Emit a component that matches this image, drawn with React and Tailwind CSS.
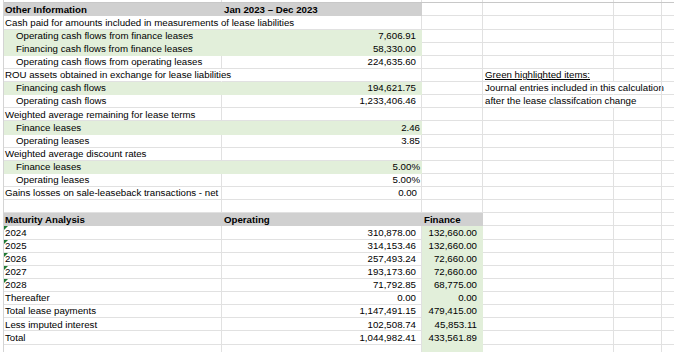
import React from 'react';

// column widths of the sheet: A..F
const W = [218, 200, 61, 131, 48, 60];
const GREEN = 'bg-[#e2efda]';
const GRAY = 'bg-[#d0d0d0]';

const ROWS = [
  { a: 'Other Information', b: 'Jan 2023 – Dec 2023', head: true, fill: [GRAY, GRAY] },
  { a: 'Cash paid for amounts included in measurements of lease liabilities', spillA: true },
  { a: 'Operating cash flows from finance leases', ind: true, b: '7,606.91', fill: [GREEN, GREEN] },
  { a: 'Financing cash flows from finance leases', ind: true, b: '58,330.00', fill: [GREEN, GREEN] },
  { a: 'Operating cash flows from operating leases', ind: true, b: '224,635.60' },
  { a: 'ROU assets obtained in exchange for lease liabilities', spillA: true, d: 'Green highlighted items:', ul: true },
  { a: 'Financing cash flows', ind: true, b: '194,621.75', fill: [GREEN, GREEN], d: 'Journal entries included in this calculation', spillD: true },
  { a: 'Operating cash flows', ind: true, b: '1,233,406.46', d: 'after the lease classifcation change', spillD: true },
  { a: 'Weighted average remaining for lease terms' },
  { a: 'Finance leases', ind: true, b: '2.46', tight: true, fill: [GREEN, GREEN] },
  { a: 'Operating leases', ind: true, b: '3.85', tight: true },
  { a: 'Weighted average discount rates' },
  { a: 'Finance leases', ind: true, b: '5.00%', tight: true, fill: [GREEN, GREEN] },
  { a: 'Operating leases', ind: true, b: '5.00%', tight: true },
  { a: 'Gains losses on sale-leaseback transactions - net', b: '0.00', mid: true },
  {},
  { a: 'Maturity Analysis', b: 'Operating', c: 'Finance', head: true, fill: [GRAY, GRAY, GRAY] },
  { a: '2024', tri: true, b: '310,878.00', c: '132,660.00', fill: [null, null, GREEN] },
  { a: '2025', tri: true, b: '314,153.46', c: '132,660.00', fill: [null, null, GREEN] },
  { a: '2026', tri: true, b: '257,493.24', c: '72,660.00', fill: [null, null, GREEN] },
  { a: '2027', tri: true, b: '193,173.60', c: '72,660.00', fill: [null, null, GREEN] },
  { a: '2028', tri: true, b: '71,792.85', c: '68,775.00', fill: [null, null, GREEN] },
  { a: 'Thereafter', b: '0.00', c: '0.00', fill: [null, null, GREEN] },
  { a: 'Total lease payments', b: '1,147,491.15', c: '479,415.00', fill: [null, null, GREEN] },
  { a: 'Less imputed interest', b: '102,508.74', c: '45,853.11', fill: [null, null, GREEN] },
  { a: 'Total', b: '1,044,982.41', c: '433,561.89', fill: [null, null, GREEN] },
  { fill: [null, null, GREEN] },
];

function Cell({ w, fill, noLine, right, bold, pl = 'pl-[1px]', pr = 'pr-[5px]', ul, tri, children }) {
  // filled cells keep their borders but paint them with the fill, as Excel hides gridlines there
  const bottom = fill ? 'border-b-transparent' : 'border-b-[#e1e1e1]';
  const side = fill || noLine ? 'border-r-transparent' : 'border-r-[#e1e1e1]';
  return (
    <div
      style={{ width: w }}
      className={`relative shrink-0 h-full flex items-end border-b border-r whitespace-nowrap ${fill || ''} ${bottom} ${side} ${
        right ? `justify-end ${pr}` : pl
      }`}
    >
      {tri && (
        <span className="absolute top-0 left-0 w-0 h-0 border-t-[4px] border-t-[#1f7a34] border-r-[4px] border-r-transparent" />
      )}
      <span className={`leading-[1.12] ${bold ? 'font-bold' : ''} ${ul ? 'underline' : ''}`}>{children}</span>
    </div>
  );
}

export default function App() {
  return (
    <div className="w-[674px] h-[352px] overflow-hidden bg-white text-black text-[9.7px] [font-family:'Liberation_Sans',Arial,sans-serif]">
      <div className="ml-[3px] border-l border-[#d4d4d4] flex flex-col">
        {/* sliver of the row above */}
        <div className="h-[3.3px] flex border-b border-[#c8c8c8]">
          {W.map((w, i) => (
            <div key={i} style={{ width: w }} className="shrink-0 border-r border-[#e1e1e1]" />
          ))}
        </div>
        {ROWS.map((r, i) => {
          const f = r.fill || [];
          return (
            <div key={i} className="h-[13.13px] flex">
              <Cell w={W[0]} fill={f[0]} noLine={r.spillA} bold={r.head} tri={r.tri} pl={r.ind ? 'pl-[12px]' : 'pl-[1px]'}>
                {r.a}
              </Cell>
              <Cell
                w={W[1]}
                fill={f[1]}
                bold={r.head}
                right={!r.head && !!r.b}
                pl="pl-[2px]"
                pr={r.tight ? 'pr-[1px]' : r.mid ? 'pr-[4px]' : 'pr-[5px]'}
              >
                {r.b}
              </Cell>
              <Cell w={W[2]} fill={f[2]} bold={r.head} right={!r.head && !!r.c} pl="pl-[2px]">
                {r.c}
              </Cell>
              <Cell w={W[3]} noLine={r.spillD} ul={r.ul} pl="pl-[2px]">
                {r.d}
              </Cell>
              <Cell w={W[4]} />
              <Cell w={W[5]} />
            </div>
          );
        })}
      </div>
    </div>
  );
}
